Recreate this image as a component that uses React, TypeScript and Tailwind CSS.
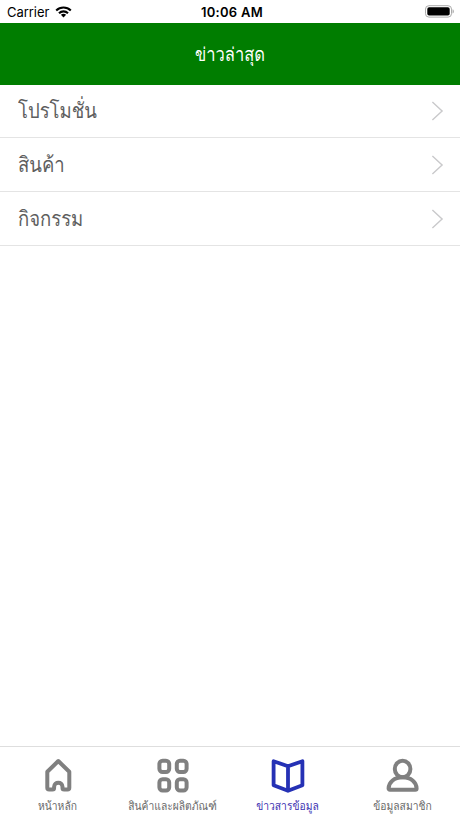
import type { ReactNode } from "react";

const thai = "font-['Loma','Noto_Sans_Thai_Looped','Noto_Sans',sans-serif]";

function StatusBar() {
  return (
    <div className="grid h-[23px] shrink-0 grid-cols-3 items-center bg-white pl-[7px] pr-[6px] font-['Inter',sans-serif] text-[13px] leading-none text-black">
      <div className="flex items-center gap-[6px] pt-px">
        <span className="tracking-[-0.05px]">Carrier</span>
        <svg width="17" height="12" viewBox="0 0 17 12" fill="none" stroke="black" strokeWidth="2.1">
          <path d="M1.2 4.4C5.2 .5 11.8 .5 15.8 4.4" />
          <path d="M4 7.2C6.5 4.8 10.5 4.8 13 7.2" />
          <path d="M8.5 11.4 5.9 8.8C7.3 7.4 9.7 7.4 11.1 8.8Z" fill="black" stroke="none" />
        </svg>
      </div>
      <span className="pl-[3px] pt-px text-center font-semibold tracking-[0.3px]">10:06 AM</span>
      <svg className="justify-self-end" width="30" height="13" viewBox="0 0 30 13">
        <rect x="1.500" y=".7" width="26" height="11.4" rx="3.4" fill="none" stroke="#aaa" />
        <rect x="3.300" y="2.3" width="22.4" height="8.2" rx="1.8" fill="black" />
        <path d="M28.6 4.3c1.5.6 1.5 3.6 0 4.2Z" fill="#999" />
      </svg>
    </div>
  );
}

function Row({ label, height }: { label: string; height: string }) {
  return (
    <button className={`flex w-full items-center justify-between border-b border-[#e4e4e4] pl-[18px] pr-4 ${height}`}>
      <span className="scale-y-[1.14] whitespace-nowrap pt-px text-[18.5px] leading-none text-[#5e5e5e]">{label}</span>
      <svg width="13" height="20" viewBox="0 0 13 20" fill="none" stroke="#c9c9cb" strokeWidth="1.4">
        <path d="m1.4 1 9.7 9-9.7 9" />
      </svg>
    </button>
  );
}

function Tab({ label, active, children }: { label: string; active?: boolean; children: ReactNode }) {
  return (
    <button className={`flex flex-col items-center pt-[11px] ${active ? "text-[#2531b5]" : "text-[#808080]"}`}>
      <svg width="36" height="36" viewBox="0 0 36 36" fill="none" stroke="currentColor" strokeWidth="4" strokeLinejoin="round" strokeLinecap="round">
        {children}
      </svg>
      <span className={`mt-[6px] scale-y-[1.14] whitespace-nowrap text-[10.3px] leading-[14px] ${active ? "text-[#3b2fb0]" : "text-[#686868]"}`}>{label}</span>
    </button>
  );
}

export default function App() {
  return (
    <div className={`flex h-[818px] w-[460px] flex-col overflow-hidden bg-white ${thai}`}>
      <StatusBar />
      <header className="flex h-[62px] shrink-0 items-center justify-center bg-[#007d00] text-[16.5px] leading-none text-white">
        <h1 className="scale-y-[1.14]">ข่าวล่าสุด</h1>
      </header>
      <main className="flex-1">
        <Row label="โปรโมชั่น" height="h-[53px]" />
        <Row label="สินค้า" height="h-[54px]" />
        <Row label="กิจกรรม" height="h-[54px]" />
      </main>
      <nav className="grid h-[72px] shrink-0 grid-cols-4 border-t border-[#dedede]">
        <Tab label="หน้าหลัก">
          <path d="M7.3 13.8 18.3 3l11 10.8v16c0 1.2-.6 1.8-1.8 1.8h-3.4c-1 0-1.6-.5-1.6-1.5v-1.3c0-5.4-8.4-5.4-8.4 0v1.3c0 1-.6 1.5-1.6 1.5H9.1c-1.2 0-1.8-.6-1.8-1.8Z" />
        </Tab>
        <Tab label="สินค้าและผลิตภัณฑ์">
          <rect x="4.4" y="2.8" width="9.8" height="11.2" rx="3.2" />
          <rect x="21.8" y="2.8" width="9.8" height="11.2" rx="3.2" />
          <rect x="4.4" y="21.3" width="9.8" height="11.2" rx="3.2" />
          <rect x="21.8" y="21.3" width="9.8" height="11.2" rx="3.2" />
        </Tab>
        <Tab label="ข่าวสารข้อมูล" active>
          <path d="m3.6 3.2 14.4 5 14.4-5v24L18 32.8 3.6 27.2ZM18 8.2v24.6" strokeWidth="3.8" />
        </Tab>
        <Tab label="ข้อมูลสมาชิก">
          <ellipse cx="17.600" cy="11" rx="7.8" ry="8.3" />
          <path d="M3.6 30.4C3.8 24 9.3 19.3 17.6 19.3S31.4 24 31.6 30.4c0 .8-.5 1.3-1.3 1.3H4.9C4.1 31.7 3.6 31.2 3.6 30.4Z" />
        </Tab>
      </nav>
    </div>
  );
}
